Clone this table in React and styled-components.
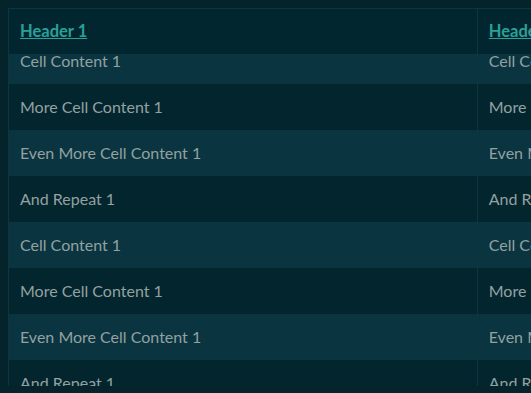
import React, { useLayoutEffect, useRef } from 'react'
import styled, { createGlobalStyle } from 'styled-components'

const GlobalStyle = createGlobalStyle`
  html, body {
    margin: 0;
    padding: 0;
    background: #05232b;
    overflow: hidden;
  }
  body {
    padding: 8px;
    font-family: Lato, "Liberation Sans", sans-serif;
  }
`

const Scroller = styled.div`
  width: 937px;
  height: calc(100vh - 16px);
  overflow: auto;
  border-top: 1px solid #0d3640;
  border-left: 1px solid #0d3640;
  scrollbar-width: none;
  &::-webkit-scrollbar {
    display: none;
  }
`

const Table = styled.table`
  width: 100%;
  border-collapse: collapse;
  table-layout: fixed;
`

const HeadCell = styled.th`
  position: sticky;
  top: 0;
  z-index: 1;
  background: #022630;
  padding: 11px 11px;
  line-height: 23px;
  text-align: left;
  font-size: 16.5px;
  font-weight: 700;
  color: #2aa198;
  text-decoration: underline;
  border-right: 1px solid #0d3640;
`

const Row = styled.tr`
  background: ${p => (p.$alt ? '#093440' : '#03252e')};
`

const Cell = styled.td`
  padding: 12px 11px;
  line-height: 22px;
  font-size: 16px;
  color: #93a1a1;
  border-right: 1px solid #0d3640;
  white-space: nowrap;
`

const lines = ['Cell Content', 'More Cell Content', 'Even More Cell Content', 'And Repeat']
const rows = Array.from({ length: 12 }, (_, i) => lines[i % 4])

export default function App() {
  const scroller = useRef(null)

  useLayoutEffect(() => {
    if (scroller.current) scroller.current.scrollTop = 16
  }, [])

  return (
    <>
      <GlobalStyle />
      <Scroller ref={scroller}>
        <Table>
          <thead>
            <tr>
              <HeadCell>Header 1</HeadCell>
              <HeadCell>Header 2</HeadCell>
            </tr>
          </thead>
          <tbody>
            {rows.map((text, i) => (
              <Row key={i} $alt={i % 2 === 0}>
                <Cell>{text} 1</Cell>
                <Cell>{text} 2</Cell>
              </Row>
            ))}
          </tbody>
        </Table>
      </Scroller>
    </>
  )
}
